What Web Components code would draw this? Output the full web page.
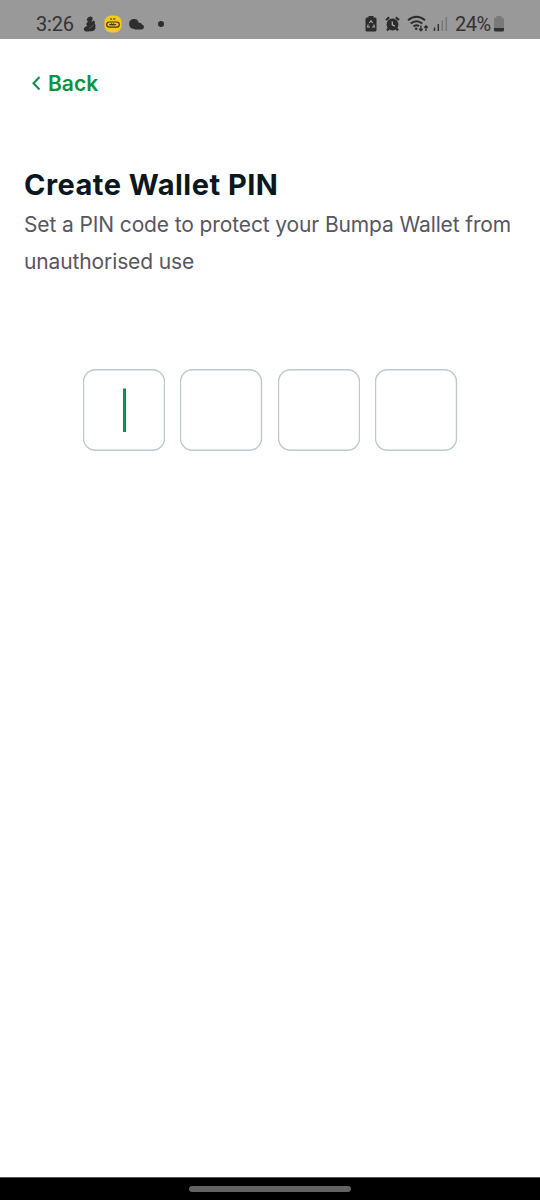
<!DOCTYPE html>
<html lang="en">
<head>
<meta charset="utf-8">
<title>Create Wallet PIN</title>
<style>
html,body{margin:0;height:100%;background:#fff}
body{font-family:Inter,"Liberation Sans",sans-serif}
</style>
</head>
<body>
<wallet-screen></wallet-screen>
<script>
const define = (name, html) => customElements.define(name, class extends HTMLElement {
  constructor() {
    super();
    const t = document.createElement('template');
    t.innerHTML = html;
    this.attachShadow({mode: 'open'}).append(t.content.cloneNode(true));
  }
});

define('status-bar', `
<style>
:host{display:flex;box-sizing:border-box;height:39px;padding:9px 35px 0 36px;align-items:center;background:#999;color:#333;font:20px/30px Roboto,sans-serif}
span{line-height:30px;white-space:nowrap}
svg{display:block;flex:none}
.time{width:47px;letter-spacing:-.2px}
.gap{flex:1}
.pct{width:39px;letter-spacing:-.5px}
</style>
<span class="time">3:26</span>
<svg width="84" height="30" viewBox="83 9 84 30">
  <g fill="#2e2e2e">
    <path d="M87.300 18.300q1.500-2.300 3.700-1.800 2.200.7 1.600 3-.4 1.200-1.400 2 1.800.2 2.600-1.300 1.800 1.500.9 3.500 1.500 1.200.6 2.800.8 2-.9 3.800-1.800 1.400-4.700.9-2.800.9-5-.3-1.500-1-.7-2.800 1.200-1.500 3.300-2-1.600-1.200-.8-2.800.9-1.300 1.900-2.800-1 .7-1.800-.2z"/>
    <path d="M93.500 24.500q-1.200 3-4.500 3.700" fill="none" stroke="#707070" stroke-width=".6"/>
  </g>
  <rect x="104.500" y="15.500" width="17" height="17" rx="6.500" fill="#f6c91e"/>
  <g fill="none" stroke="#40370d" stroke-width="1.200">
    <path d="M110 19h2m1 0h2.500"/>
    <rect x="106.700" y="22" width="12.600" height="5.200" rx="2.600"/>
    <path d="M109.500 24.200q1 1.500 2 0q1 1.500 2 0q1 1.500 2.500 0"/>
  </g>
  <path fill="#2e2e2e" d="M134 29a4.900 5 0 1 1 4.800-6c2-.8 3 1 3 1.500 3 .3 2.800 5-.3 5h-5q-1.500 0-2.500-.5z"/>
  <circle cx="161" cy="24" r="3" fill="#2e2e2e"/>
</svg>
<div class="gap"></div>
<svg width="90" height="30" viewBox="365 9 90 30">
  <g fill="#2c2c2c">
    <path d="M368.500 17.500v-1.500h5v1.500h1.500q1.500 0 1.500 1.500v11q0 1.500-1.500 1.500h-8q-1.500 0-1.500-1.500v-11q0-1.500 1.500-1.500z"/>
    <path d="M369.300 23l1.700-2.300 1.700 2.300m1 1.500l.8 2.500h-2.500m-2 0h-2.500l.8-2.500" fill="none" stroke="#aaa" stroke-width="1.100"/>
    <circle cx="392.500" cy="24.500" r="5.900"/>
    <path d="M386 20l3.200-2.700M399 20l-3.200-2.700M389 28l-2 2.500M396 28l2 2.500" stroke="#2c2c2c" stroke-width="2.200"/>
    <path d="M392.300 21.500v3.300l2.500 1.300" fill="none" stroke="#aaa" stroke-width="1.300"/>
  </g>
  <g fill="none" stroke="#2c2c2c" stroke-width="1.900">
    <path d="M408 20.300q8.500-7 17 0M410.700 23.600q5.800-4.700 11.600 0M413.500 26.500q3-2.200 5.500-.3"/>
    <path d="M420.900 25.500v5.200m-1.700-1.900l1.700 1.900 1.700-1.900M426 31v-5.200m-1.700 1.900l1.700-1.900 1.700 1.900" stroke-width="1.300"/>
  </g>
  <circle cx="416.200" cy="28.700" r="1.300" fill="#2c2c2c"/>
  <path d="M434.500 27.500v3.500M438.300 24v7" stroke="#333" stroke-width="1.500"/>
  <path d="M442.300 20.500v10.500M446.300 17v14" stroke="#777" stroke-width="1.500"/>
</svg>
<span class="pct">24%</span>
<svg width="11" height="30" viewBox="494 9 11 30">
  <path d="M496.500 17.500v-1.500h5v1.500q2.500 0 2.500 2.500v8h-10v-8q0-2.500 2.500-2.500z" fill="#797979"/>
  <path d="M494 28h10v2q0 1.500-1.500 1.500h-7q-1.500 0-1.500-1.500z" fill="#303030"/>
</svg>`);

define('back-link', `
<style>
:host{display:flex;align-items:center;height:30px;color:#0c9147;font-size:21px;font-weight:600;line-height:30px}
svg{flex:none;margin-right:7px}
span{letter-spacing:0;padding-top:2px}
</style>
<svg width="10" height="16" viewBox="0 0 10 16" fill="none" stroke="currentColor" stroke-width="2"><path d="M8.500 2L2.500 8.200 8.500 14.500"/></svg>
<span><slot></slot></span>`);

define('page-heading', `
<style>
:host{display:block}
h1{margin:0;font-size:29px;line-height:38px;font-weight:700;color:#091720;letter-spacing:.48px;white-space:nowrap}
p{margin:2px 0 0;font-size:21px;line-height:37px;color:#58565f;letter-spacing:-.12px;white-space:nowrap}
</style>
<h1><slot></slot></h1>
<p>Set a PIN code to protect your Bumpa Wallet from<br>unauthorised use</p>`);

define('pin-box', `
<style>
:host{display:block;width:82.500px;height:82px}
svg{display:block}
.caret{display:none}
:host([active]) .caret{display:block}
</style>
<svg width="82.500" height="82" viewBox="0 0 82.500 82">
  <rect x=".5" y=".7" width="81" height="80.600" rx="12" fill="none" stroke="#bdc9ca" stroke-width="1.400"/>
  <rect class="caret" x="40" y="19.500" width="3" height="43.500" fill="#128c4c"/>
</svg>`);

define('pin-entry', `
<style>:host{display:flex;gap:15px}</style>
<pin-box active></pin-box><pin-box></pin-box><pin-box></pin-box><pin-box></pin-box>`);

define('home-bar', `
<style>
:host{display:flex;box-sizing:border-box;height:23px;background:#000;border-top:1px solid #555;justify-content:center;padding-top:8px}
i{width:162px;height:6px;border-radius:3px;background:#626262}
</style><i></i>`);

define('wallet-screen', `
<style>
:host{display:flex;flex-direction:column;height:1200px;width:540px;overflow:hidden}
main{flex:1;padding:29px 0 0 24px}
back-link{margin-left:7px}
page-heading{margin-top:68px}
pin-entry{margin:89px 0 0 58.500px}
</style>
<status-bar></status-bar>
<main><back-link>Back</back-link><page-heading>Create Wallet PIN</page-heading><pin-entry></pin-entry></main>
<home-bar></home-bar>`);
</script>
</body>
</html>
